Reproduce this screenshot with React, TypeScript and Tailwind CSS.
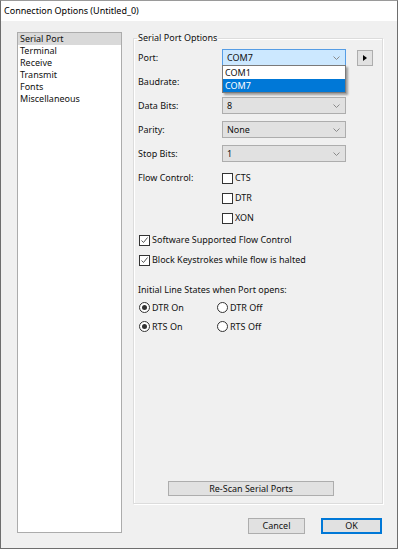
import React from "react";

const items = ["Serial Port", "Terminal", "Receive", "Transmit", "Fonts", "Miscellaneous"];

function Chevron() {
  return (
    <svg width="7" height="4" viewBox="0 0 7 4">
      <path d="M0.5 0.5 L3.5 3.5 L6.5 0.5" stroke="#8a8a8a" strokeWidth="1" fill="none" />
    </svg>
  );
}

function Combo({ value, active }: { value: string; active?: boolean }) {
  return (
    <div
      className={
        active
          ? "flex h-[17px] w-[124px] items-center justify-between border border-[#569de5] bg-[#cce8ff] pl-[4px] pr-[5px]"
          : "flex h-[17px] w-[124px] items-center justify-between border border-[#adadad] bg-[#e1e1e1] pl-[4px] pr-[5px]"
      }
    >
      <span>{value}</span>
      <Chevron />
    </div>
  );
}

function Row({ label, children }: { label: string; children: React.ReactNode }) {
  return (
    <div className="flex h-[17px] items-center">
      <span className="w-[84px]">{label}</span>
      {children}
    </div>
  );
}

function Check({ label, checked, className = "" }: { label: string; checked?: boolean; className?: string }) {
  return (
    <div className={"flex h-[20px] items-center gap-[2px] " + className}>
      <span className="flex h-[11px] w-[11px] items-center justify-center border border-[#333333] bg-white">
        {checked && (
          <svg width="9" height="9" viewBox="0 0 9 9">
            <path d="M1.5 4.5 L3.5 6.5 L7.5 1.5" stroke="#555555" strokeWidth="1" fill="none" />
          </svg>
        )}
      </span>
      <span>{label}</span>
    </div>
  );
}

function Radio({ label, checked }: { label: string; checked?: boolean }) {
  return (
    <div className="flex w-[78px] items-center gap-[2px]">
      <span className="flex h-[11px] w-[11px] items-center justify-center rounded-full border border-[#333333] bg-white">
        {checked && <span className="h-[5px] w-[5px] rounded-full bg-[#333333]" />}
      </span>
      <span>{label}</span>
    </div>
  );
}

export default function App() {
  return (
    <div className="h-[550px] w-[399px] bg-white font-['Noto_Sans',sans-serif] text-[9px] text-[#111111]">
      <div className="flex h-[549px] w-[398px] flex-col border border-t-[#9a9a9a] border-[#6e6e6e] bg-[#f0f0f0]">
        <div className="flex h-[20px] items-center bg-white pl-[3px] text-[9px] text-black">
          Connection Options (Untitled_0)
        </div>

        <div className="flex pl-[16px] pt-[11px]">
          {/* category list */}
          <div className="h-[501px] w-[105px] border border-[#acacac] bg-white">
            {items.map((it, i) => (
              <div
                key={it}
                className={
                  i === 0
                    ? "flex h-[12px] items-center bg-[#d9d9d9] pl-[2px]"
                    : "flex h-[12px] items-center pl-[2px]"
                }
              >
                {it}
              </div>
            ))}
          </div>

          <div className="ml-[11px] flex w-[250px] flex-col">
            <fieldset className="h-[472px] min-w-0 border border-[#dcdcdc] pl-[4px] shadow-[inset_1px_1px_0_#ffffff,1px_1px_0_#ffffff]">
              <legend className="-ml-[1px] px-[1px] leading-[12px]">Serial Port Options</legend>

              <div className="flex flex-col gap-[7px] pt-[5px]">
                <div className="flex h-[17px] items-center">
                  <span className="w-[84px]">Port:</span>
                  <div className="relative">
                    <Combo value="COM7" active />
                    <div className="absolute left-0 top-[16px] z-10 w-[124px] border border-[#7a7a7a] bg-white shadow-[2px_2px_2px_rgba(0,0,0,0.35)]">
                      <div className="flex h-[13px] items-center pl-[2px]">COM1</div>
                      <div className="flex h-[13px] items-center bg-[#0078d7] pl-[2px] text-white">COM7</div>
                    </div>
                  </div>
                  <button className="ml-[11px] flex h-[16px] w-[16px] items-center justify-center border border-[#adadad] bg-[#e1e1e1]">
                    <svg width="4" height="6" viewBox="0 0 4 6">
                      <path d="M0 0 L4 3 L0 6 Z" fill="#000000" />
                    </svg>
                  </button>
                </div>
                <Row label="Baudrate:">
                  <Combo value="" />
                </Row>
                <Row label="Data Bits:">
                  <Combo value="8" />
                </Row>
                <Row label="Parity:">
                  <Combo value="None" />
                </Row>
                <Row label="Stop Bits:">
                  <Combo value="1" />
                </Row>
              </div>

              <div className="mt-[6px] flex">
                <span className="flex h-[20px] w-[84px] items-center">Flow Control:</span>
                <div className="flex flex-col">
                  <Check label="CTS" />
                  <Check label="DTR" />
                  <Check label="XON" />
                </div>
              </div>

              <div className="mt-[2px] flex flex-col">
                <Check label="Software Supported Flow Control" checked className="ml-[1px] h-[19px]" />
                <Check label="Block Keystrokes while flow is halted" checked className="ml-[1px] h-[19px]" />
              </div>

              <div className="mt-[13px] flex h-[14px] items-center">Initial Line States when Port opens:</div>

              <div className="ml-[1px] mt-[1px] flex flex-col">
                <div className="flex h-[19px] items-center">
                  <Radio label="DTR On" checked />
                  <Radio label="DTR Off" />
                </div>
                <div className="flex h-[19px] items-center">
                  <Radio label="RTS On" checked />
                  <Radio label="RTS Off" />
                </div>
              </div>

              <button className="ml-[30px] mt-[145px] flex h-[15px] w-[166px] items-center justify-center border border-[#adadad] bg-[#e1e1e1]">
                Re-Scan Serial Ports
              </button>
            </fieldset>

            <div className="mr-[1px] mt-[14px] flex justify-end gap-[16px]">
              <button className="flex h-[16px] w-[57px] items-center justify-center border border-[#adadad] bg-[#e1e1e1]">
                Cancel
              </button>
              <button className="flex h-[16px] w-[61px] items-center justify-center border border-[#0078d7] bg-[#e1e1e1] shadow-[inset_0_0_0_1px_#0078d7]">
                OK
              </button>
            </div>
          </div>
        </div>
      </div>
    </div>
  );
}
